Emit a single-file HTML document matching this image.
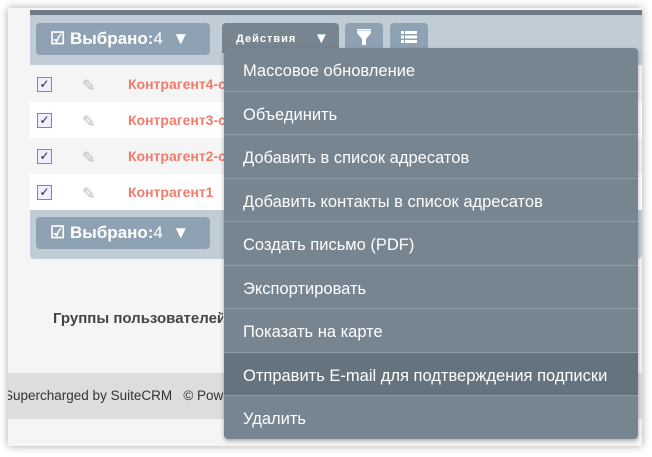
<!DOCTYPE html><html><head><style>
body{margin:0;width:652px;height:457px;background:#fff;position:relative;overflow:hidden;font-family:"Liberation Sans",sans-serif}
.frame{position:absolute;left:8px;top:8px;width:634px;height:438px;background:#f5f5f5;box-shadow:0 0 8px rgba(0,0,0,.35)}
.abs{position:absolute}
.btn{position:absolute;background:#8fa2b3;border-radius:4px;color:#fff;font-weight:bold}
.row{position:absolute;left:30px;width:612px;height:36px}
.cb{position:absolute;left:7px;top:11px;width:13px;height:13px;border:1px solid #888;background:#eef;color:#224;font-size:12px;line-height:13px;text-align:center}
.pen{position:absolute;left:52px;top:10px;color:#bbb;font-size:16px}
.nm{position:absolute;left:98px;top:10px;color:#f07c6c;font-weight:bold;font-size:14px}
.dd{position:absolute;z-index:5;left:224px;top:48px;width:414px;height:391px;background:#778591;border-radius:4px;box-shadow:0 2px 4px rgba(0,0,0,.3)}
.it{height:42.5px;border-bottom:1.5px solid #8f9ba6;color:#fff;font-size:16.5px;line-height:47px;padding-left:19px;box-sizing:content-box;white-space:nowrap}
</style></head><body>
<div class="frame"></div>
<div class="abs" style="left:30px;top:10px;width:612px;height:5px;background:#6c7a86"></div>
<div class="abs" style="left:30px;top:15px;width:612px;height:50px;background:#c0cdd6"></div>
<div class="btn" style="left:36px;top:23px;width:174px;height:32px;font-size:17px;line-height:32px"><span style="margin-left:14px">☑ Выбрано:<span style="font-weight:normal">4</span> &nbsp;▼</span></div>
<div class="abs" style="left:222px;top:23px;width:117px;height:30px;background:#778591;border-radius:4px 4px 0 0;color:#fff;font-weight:bold;font-size:11px;line-height:32px;letter-spacing:1px"><span style="margin-left:14px">Действия</span><span style="position:absolute;left:92px;font-size:15px">▼</span></div>
<div class="btn" style="left:345px;top:23px;width:38px;height:28px"><svg width="38" height="28"><path d="M12 8h14v2l-5 6v6h-4v-6l-5-6z" fill="#fff"/><rect x="12" y="6" width="14" height="1.5" fill="#fff"/></svg></div>
<div class="btn" style="left:390px;top:23px;width:38px;height:28px"><svg width="38" height="28"><g fill="#fff"><rect x="11" y="8" width="3" height="3"/><rect x="15" y="8" width="12" height="3"/><rect x="11" y="12.5" width="3" height="3"/><rect x="15" y="12.5" width="12" height="3"/><rect x="11" y="17" width="3" height="3"/><rect x="15" y="17" width="12" height="3"/></g></svg></div>
<div class="row" style="top:66px;background:#f5f5f5"><div class="cb">✓</div><div class="pen">✎</div><div class="nm">Контрагент4-с</div></div>
<div class="row" style="top:102px;background:#fff"><div class="cb">✓</div><div class="pen">✎</div><div class="nm">Контрагент3-с</div></div>
<div class="row" style="top:138px;background:#f5f5f5"><div class="cb">✓</div><div class="pen">✎</div><div class="nm">Контрагент2-с</div></div>
<div class="row" style="top:174px;background:#fff"><div class="cb">✓</div><div class="pen">✎</div><div class="nm">Контрагент1</div></div>
<div class="abs" style="left:30px;top:210px;width:612px;height:49px;background:#c0cdd6;border-radius:0 0 4px 4px"></div>
<div class="btn" style="left:36px;top:217px;width:174px;height:32px;font-size:17px;line-height:32px"><span style="margin-left:14px">☑ Выбрано:<span style="font-weight:normal">4</span> &nbsp;▼</span></div>
<div class="abs" style="left:53px;top:310px;width:170px;overflow:hidden;white-space:nowrap;font-weight:bold;font-size:15px;color:#444">Группы пользователей</div>
<div class="abs" style="left:8px;top:373px;width:634px;height:46px;background:#ddd;font-size:13.5px;color:#333;line-height:46px;white-space:nowrap;overflow:hidden"><span style="margin-left:-4px">Supercharged by SuiteCRM &nbsp;&nbsp;© Powered</span></div>
<div class="dd">
<div class="it">Массовое обновление</div>
<div class="it">Объединить</div>
<div class="it">Добавить в список адресатов</div>
<div class="it">Добавить контакты в список адресатов</div>
<div class="it">Создать письмо (PDF)</div>
<div class="it">Экспортировать</div>
<div class="it">Показать на карте</div>
<div class="it" style="background:#65737f">Отправить E-mail для подтверждения подписки</div>
<div class="it" style="border:0">Удалить</div>
</div>
</body></html>
